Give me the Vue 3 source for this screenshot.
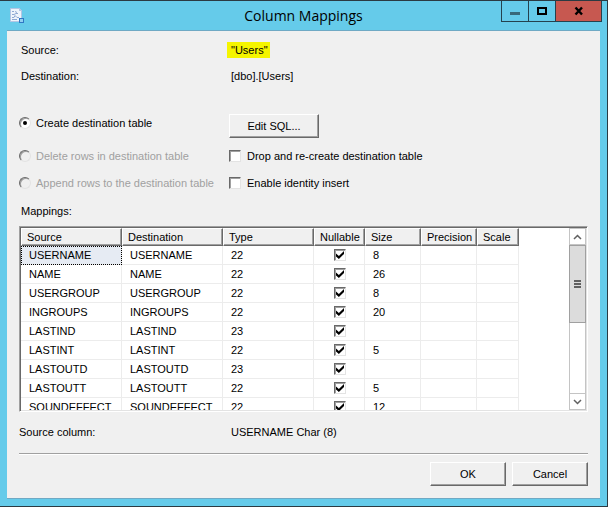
<template>
  <div class="window" role="dialog" aria-labelledby="window-title">
    <header class="titlebar">
      <svg class="app-icon" viewBox="0 0 16 17" aria-hidden="true">
        <path d="M1.5 1.5h9l2 2v11h-11z" fill="#eef4fb" stroke="#b3c6e4" />
        <path d="M10 1l3 3h-3z" fill="#b3c6e4" />
        <path
          d="M3 4.500h2M6 4.500l2 1M3 7.500h2l2-1h2M3 10.500h2l1-2 2 2h2M3 12.500h5"
          fill="none"
          stroke="#8fa9d3"
        />
        <rect x="10.500" y="11.500" width="4" height="4" fill="#8fd0f2" stroke="#2f78c4" />
      </svg>
      <h1 id="window-title" class="title">Column Mappings</h1>
      <div class="caption-buttons">
        <button class="caption" aria-label="Minimize">
          <svg width="10" height="10" viewBox="0 0 10 10">
            <rect x="0" y="6" width="10" height="3" fill="#38697a" />
          </svg>
        </button>
        <button class="caption" aria-label="Maximize">
          <svg width="10" height="10" viewBox="0 0 10 10">
            <rect x="1" y="2" width="8" height="6" fill="none" stroke="#000" stroke-width="2" />
          </svg>
        </button>
        <button class="caption caption--close" aria-label="Close">
          <svg width="10" height="10" viewBox="0 0 10 10">
            <path d="M1.500 1.500l6.500 7M8 1.500l-6.500 7" stroke="#000" stroke-width="2.400" />
          </svg>
        </button>
      </div>
    </header>

    <main class="client">
      <dl class="facts">
        <dt>Source:</dt>
        <dd><mark>"Users"</mark></dd>
        <dt>Destination:</dt>
        <dd>[dbo].[Users]</dd>
      </dl>

      <div class="options">
        <label class="option">
          <input v-model="mode" type="radio" name="mode" value="create" />
          Create destination table
        </label>
        <button class="btn btn--sql">Edit SQL...</button>
        <label class="option option--disabled">
          <input v-model="mode" type="radio" name="mode" value="delete" disabled />
          Delete rows in destination table
        </label>
        <label class="option option--check">
          <input v-model="dropTable" type="checkbox" />
          Drop and re-create destination table
        </label>
        <label class="option option--disabled">
          <input v-model="mode" type="radio" name="mode" value="append" disabled />
          Append rows to the destination table
        </label>
        <label class="option option--check">
          <input v-model="identityInsert" type="checkbox" />
          Enable identity insert
        </label>
      </div>

      <h2 id="mappings-label" class="section-label">Mappings:</h2>

      <div class="grid">
        <div ref="viewport" class="viewport">
          <table aria-labelledby="mappings-label">
            <colgroup>
              <col v-for="col in columns" :key="col.name" :class="col.size" />
            </colgroup>
            <thead>
              <tr>
                <th v-for="col in columns" :key="col.name" scope="col">{{ col.name }}</th>
              </tr>
            </thead>
            <tbody>
              <tr v-for="(row, i) in rows" :key="row.name">
                <td :class="{ selected: i === 0 }">{{ row.name }}</td>
                <td>{{ row.name }}</td>
                <td>{{ row.type }}</td>
                <td class="check">
                  <input
                    v-model="row.nullable"
                    type="checkbox"
                    :aria-label="`${row.name} nullable`"
                  />
                </td>
                <td>{{ row.size }}</td>
                <td></td>
                <td></td>
              </tr>
            </tbody>
          </table>
        </div>
        <div class="scrollbar">
          <button class="arrow" aria-label="Scroll up" @click="scroll(-19)">
            <svg width="9" height="6" viewBox="0 0 9 6">
              <path d="M1 5l3.500-3.500L8 5" fill="none" stroke="#606060" stroke-width="1.500" />
            </svg>
          </button>
          <div class="track">
            <div class="thumb"><i></i><i></i><i></i></div>
          </div>
          <button class="arrow" aria-label="Scroll down" @click="scroll(19)">
            <svg width="9" height="6" viewBox="0 0 9 6">
              <path d="M1 1l3.500 3.500L8 1" fill="none" stroke="#606060" stroke-width="1.500" />
            </svg>
          </button>
        </div>
      </div>

      <dl class="facts facts--column">
        <dt>Source column:</dt>
        <dd>USERNAME Char (8)</dd>
      </dl>

      <footer class="actions">
        <button class="btn">OK</button>
        <button class="btn">Cancel</button>
      </footer>
    </main>
  </div>
</template>

<script setup>
import { ref } from "vue";

const mode = ref("create");
const dropTable = ref(false);
const identityInsert = ref(false);
const viewport = ref(null);

const columns = [
  { name: "Source", size: "col-name" },
  { name: "Destination", size: "col-name" },
  { name: "Type", size: "col-type" },
  { name: "Nullable", size: "col-null" },
  { name: "Size", size: "col-size" },
  { name: "Precision", size: "col-size" },
  { name: "Scale", size: "col-scale" },
];

const rows = ref([
  { name: "USERNAME", type: 22, nullable: true, size: 8 },
  { name: "NAME", type: 22, nullable: true, size: 26 },
  { name: "USERGROUP", type: 22, nullable: true, size: 8 },
  { name: "INGROUPS", type: 22, nullable: true, size: 20 },
  { name: "LASTIND", type: 23, nullable: true, size: "" },
  { name: "LASTINT", type: 22, nullable: true, size: 5 },
  { name: "LASTOUTD", type: 23, nullable: true, size: "" },
  { name: "LASTOUTT", type: 22, nullable: true, size: 5 },
  { name: "SOUNDEFFECT", type: 22, nullable: true, size: 12 },
]);

function scroll(step) {
  viewport.value.scrollBy(0, step);
}
</script>

<style>
body {
  margin: 0;
}
</style>

<style scoped>
* {
  box-sizing: border-box;
}
.window {
  display: flex;
  flex-direction: column;
  height: 100vh;
  min-height: 420px;
  padding: 0 7px 7px;
  background: #65cbea;
  border: solid #2b3a42;
  border-width: 1px 1px 1px 0;
  font: 11px/16px "Liberation Sans", Arial, sans-serif;
  color: #000;
}
button,
input {
  font: inherit;
  color: inherit;
  margin: 0;
}

/* title bar */
.titlebar {
  display: grid;
  grid-template-columns: 102px 1fr 104px;
  height: 29px;
  flex: none;
  margin-right: -2px;
}
.app-icon {
  width: 16px;
  height: 17px;
  margin: 6px 0 0 2px;
}
.title {
  margin: 0;
  font: 14px/30px "Open Sans", "Noto Sans", sans-serif;
  text-align: center;
}
.caption-buttons {
  display: flex;
  justify-content: flex-end;
  height: 21px;
}
.caption {
  display: grid;
  place-items: center;
  width: 27px;
  padding: 0;
  background: transparent;
  border: solid #24424e;
  border-width: 0 0 1px 1px;
}
.caption--close {
  width: 47px;
  background: #c75850;
  border-right-width: 1px;
}

/* client area */
.client {
  display: flex;
  flex-direction: column;
  flex: 1;
  min-height: 0;
  padding: 11px 12px 12px;
  background: #f0f0f0;
  border: solid #6fa9c4;
  border-width: 1px 0;
}
.facts {
  display: grid;
  grid-template-columns: 210px 1fr;
  row-gap: 10px;
  margin: 0;
  padding-left: 2px;
}
.facts dd {
  margin: 0;
}
.facts mark {
  display: inline-block;
  margin-left: -4px;
  padding: 0 2px 0 4px;
  background: #f5f500;
  color: inherit;
}
.facts--column {
  margin-top: 12px;
  padding-left: 0;
  grid-template-columns: 212px 1fr;
}

.options {
  display: grid;
  grid-template-columns: 210px 1fr;
  align-items: start;
  justify-items: start;
  row-gap: 9px;
  margin-top: 30px;
}
.option {
  display: flex;
  align-items: center;
  gap: 5px;
  height: 18px;
}
.option--check {
  gap: 6px;
}
.option--disabled {
  color: #a0a0a0;
}
input[type="radio"],
input[type="checkbox"] {
  appearance: none;
  display: grid;
  place-items: center;
  flex: none;
  width: 12px;
  height: 12px;
  background: #fff;
  border: 1px solid;
  border-color: #696969 #e3e3e3 #e3e3e3 #696969;
  box-shadow: inset 1px 1px #a0a0a0;
}
input[type="radio"] {
  border-radius: 50%;
}
input[type="radio"]:disabled {
  background: #f0f0f0;
}
input[type="radio"]:checked::before {
  content: "";
  width: 4px;
  height: 4px;
  border-radius: 50%;
  background: #000;
}
input[type="checkbox"]:checked::before {
  content: "";
  width: 8px;
  height: 8px;
  background: #000;
  clip-path: polygon(0 30%, 36% 62%, 100% 0, 100% 36%, 36% 100%, 0 68%);
}

.btn {
  width: 76px;
  height: 24px;
  padding: 0;
  background: #f0f0f0;
  border: 1px solid;
  border-color: #fff #696969 #696969 #fff;
  box-shadow: inset -1px -1px #a0a0a0;
}
.btn--sql {
  width: 90px;
}

.section-label {
  margin: 11px 0 7px;
  padding-left: 2px;
  font: inherit;
}

/* mappings grid */
.grid {
  display: flex;
  flex: 1;
  min-height: 0;
  background: #fff;
  border: 1px solid;
  border-color: #a0a0a0 #fff #fff #a0a0a0;
  box-shadow:
    inset 1px 1px #696969,
    inset -1px -1px #e3e3e3;
  padding: 1px;
}
.viewport {
  flex: 1;
  overflow: hidden;
}
table {
  width: 498px;
  table-layout: fixed;
  border-collapse: separate;
  border-spacing: 0;
}
.col-name {
  width: 101px;
}
.col-type {
  width: 91px;
}
.col-null {
  width: 51px;
}
.col-size {
  width: 56px;
}
.col-scale {
  width: 42px;
}
th {
  height: 18px;
  padding: 0 0 0 5px;
  background: #f0f0f0;
  border: 1px solid;
  border-color: #fff #696969 #696969 #fff;
  box-shadow: inset -1px -1px #a0a0a0;
  font-weight: normal;
  line-height: 16px;
  text-align: left;
  white-space: nowrap;
}
td {
  height: 19px;
  padding: 0 0 0 8px;
  border: solid #ececec;
  border-width: 0 1px 1px 0;
  line-height: 18px;
}
td.selected {
  background: #e6ebf3;
  outline: 1px dotted #000;
  outline-offset: -1px;
}
td.check {
  padding: 0 0 0 2px;
}
td.check input {
  margin: 0 auto;
}

.scrollbar {
  display: flex;
  flex-direction: column;
  width: 17px;
}
.arrow {
  display: grid;
  place-items: center;
  height: 17px;
  padding: 0;
  background: #fff;
  border: 1px solid #c4c4c4;
}
.track {
  flex: 1;
  border: solid #c4c4c4;
  border-width: 0 1px;
}
.thumb {
  display: flex;
  flex-direction: column;
  align-items: center;
  justify-content: center;
  gap: 1px;
  height: 53%;
  margin: 0 -1px;
  background: #dcdcdc;
  border: 1px solid #a0a0a0;
}
.thumb i {
  width: 7px;
  height: 2px;
  background: #606060;
}

.actions {
  display: flex;
  justify-content: flex-end;
  gap: 6px;
  margin-top: 13px;
  padding-top: 8px;
  border-top: 1px solid #a0a0a0;
  box-shadow: inset 0 1px #fff;
}
</style>
